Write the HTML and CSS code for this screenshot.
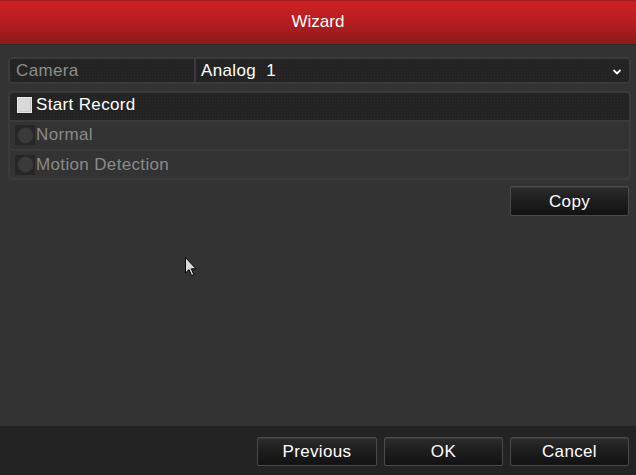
FILE: index.html
```html
<!DOCTYPE html>
<html>
<head>
<meta charset="utf-8">
<link rel="stylesheet" href="styles.css">
</head>
<body>
<div class="dialog">
  <div class="header">Wizard</div>
  <div class="main">
    <div class="field">
      <div class="field-label">Camera</div>
      <div class="field-value">
        <span>Analog&nbsp;&nbsp;1</span>
        <svg class="chev" width="8" height="6" viewBox="0 0 8 6"><path d="M0.5 1 L4 4.5 L7.5 1" fill="none" stroke="#fff" stroke-width="1.8"/></svg>
      </div>
    </div>
    <div class="group">
      <div class="row row-dark">
        <span class="check"></span>
        <span class="txt-white">Start Record</span>
      </div>
      <div class="row">
        <span class="radio"><span class="dot"></span></span>
        <span class="txt-gray">Normal</span>
      </div>
      <div class="row row-last">
        <span class="radio"><span class="dot"></span></span>
        <span class="txt-gray">Motion Detection</span>
      </div>
    </div>
    <div class="copy-line">
      <button class="btn">Copy</button>
    </div>
  </div>
  <div class="footer">
    <button class="btn">Previous</button>
    <button class="btn">OK</button>
    <button class="btn">Cancel</button>
  </div>
  <svg class="cursor" width="13" height="20" viewBox="0 0 13 20"><path d="M0.5 0.5 L0.5 16 L4 12.6 L6.6 18.6 L8.8 17.6 L6.3 11.8 L11 11.8 Z" fill="#d8d8d8" stroke="#000" stroke-width="1"/></svg>
</div>
</body>
</html>
```
FILE: styles.css
```css
* { box-sizing: border-box; }
html, body { margin: 0; padding: 0; background: #333333; }
body {
  font-family: "Liberation Sans", Arial, sans-serif;
  font-size: 17px;
  letter-spacing: 0.35px;
}
.dialog {
  position: relative;
  width: 636px;
  height: 475px;
  display: flex;
  flex-direction: column;
  background: #333333;
  overflow: hidden;
}
.header {
  height: 45px;
  flex: none;
  display: flex;
  align-items: center;
  justify-content: center;
  color: #ffffff;
  font-size: 17px;
  letter-spacing: 0;
  padding-bottom: 1px;
  background: linear-gradient(#c41f23 0%, #c92125 8%, #b91d20 45%, #8c1a1b 100%);
  border-top: 1px solid #a81c1f;
  border-bottom: 1px solid #2a2a2a;
}
.main {
  flex: 1;
  padding: 12px 5px 0 8px;
  display: flex;
  flex-direction: column;
}
.field {
  height: 27px;
  display: flex;
  border: 2px solid #3b3b3b;
  border-radius: 5px;
  background: #242424;
  overflow: hidden;
}
.field-label {
  width: 186px;
  flex: none;
  color: #8e8e8e;
  padding-left: 6px;
  display: flex;
  align-items: center;
  border-right: 2px solid #3b3b3b;
  background-color: #232323;
  background-image: radial-gradient(#2b2b2b 0.6px, transparent 0.8px);
  background-size: 3px 3px;
}
.field-value {
  flex: 1;
  color: #ffffff;
  padding-left: 5px;
  padding-right: 8px;
  display: flex;
  align-items: center;
  justify-content: space-between;
  background-color: #232323;
  background-image: radial-gradient(#2b2b2b 0.6px, transparent 0.8px);
  background-size: 3px 3px;
}
.chev { margin-top: 2px; }
.group {
  margin-top: 7px;
  border: 2px solid #3b3b3b;
  border-radius: 5px;
  overflow: hidden;
  background: #333333;
}
.row {
  height: 29px;
  display: flex;
  align-items: center;
  padding-left: 5px;
  padding-bottom: 1px;
  border-bottom: 2px solid #3b3b3b;
  gap: 1px;
}
.row-last { border-bottom: none; height: 27px; padding-bottom: 0; }
.row-dark {
  background-color: #232323;
  background-image: radial-gradient(#2b2b2b 0.6px, transparent 0.8px);
  background-size: 3px 3px;
  padding-left: 7px;
  padding-bottom: 3px;
  gap: 4px;
}
.check {
  width: 15px;
  height: 16px;
  background: #d9d9d9;
  border: 1px solid #e8e8e8;
  box-shadow: inset -1px -1px 0 #c8c8c8;
}
.radio {
  width: 20px;
  height: 20px;
  background: #262626;
  display: flex;
  align-items: center;
  justify-content: center;
}
.dot {
  width: 17px;
  height: 17px;
  border-radius: 50%;
  background: #3a3a3a;
  border: 1px solid #2c2c2c;
}
.txt-white { color: #ffffff; }
.txt-gray { color: #8a8a8a; }
.copy-line {
  margin-top: 6px;
  display: flex;
  justify-content: flex-end;
  padding-right: 2px;
}
.btn {
  width: 119px;
  height: 30px;
  font-family: "Liberation Sans", Arial, sans-serif;
  font-size: 17px;
  letter-spacing: 0.35px;
  color: #ffffff;
  border: 1px solid #4a4a4a;
  border-radius: 2px;
  background: linear-gradient(#2c2c2c 0%, #1e1e1e 45%, #121212 100%);
  box-shadow: inset 0 1px 0 #3a3a3a;
  padding: 1px 0 0 0;
}
.footer {
  height: 49px;
  flex: none;
  background: #232323;
  display: flex;
  justify-content: flex-end;
  align-items: flex-start;
  padding-top: 11px;
  padding-right: 7px;
  gap: 7px;
}
.footer .btn { width: 119px; height: 29px; }
.footer .btn:first-child { width: 120px; }
.cursor {
  position: absolute;
  left: 185px;
  top: 257px;
}
```
